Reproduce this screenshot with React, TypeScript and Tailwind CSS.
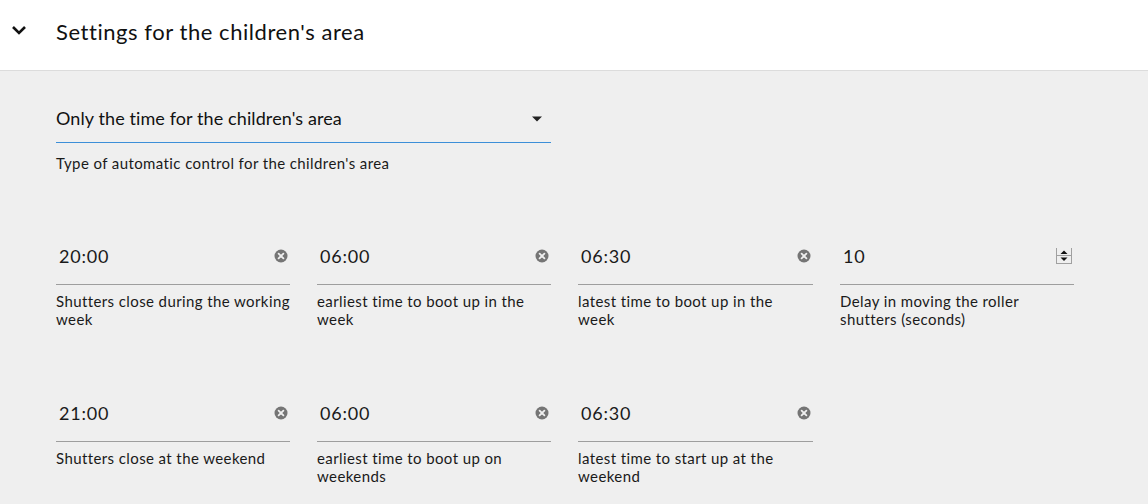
import React from "react";

const font = { fontFamily: 'Lato, "Open Sans", sans-serif' };

function ClearIcon() {
  return (
    <svg width="14" height="14" viewBox="0 0 14 14" className="shrink-0">
      <circle cx="7" cy="7" r="6.5" fill="#757575" />
      <path d="M4.6 4.6 L9.4 9.4 M9.4 4.6 L4.6 9.4" stroke="#efefef" strokeWidth="1.8" strokeLinecap="round" />
    </svg>
  );
}

function Spinner() {
  return (
    <div className="w-[16px] h-[16px] border-x border-b border-[#a0a0a0] flex flex-col shrink-0">
      <svg width="14" height="15" viewBox="0 0 14 15">
        <path d="M3.5 6 L7 2.5 L10.5 6 Z" fill="#111" />
        <line x1="0" y1="7.5" x2="14" y2="7.5" stroke="#a0a0a0" strokeWidth="1" />
        <path d="M3.5 9.5 L7 13 L10.5 9.5 Z" fill="#111" />
      </svg>
    </div>
  );
}

function Field({ value, label, spin }: { value: string; label: string; spin?: boolean }) {
  return (
    <div className="flex flex-col">
      <div className="h-[55px] flex items-center border-b border-[#9e9e9e] pl-[3px] pr-[2px]">
        <span className="flex-1 text-[18px] text-[#1a1a1a] tracking-[0.8px]">{value}</span>
        <span className="mb-[2px]">{spin ? <Spinner /> : <ClearIcon />}</span>
      </div>
      <div className="pt-[7px] text-[15px] leading-[18px] text-[#1a1a1a] tracking-[0.4px] h-[48px]">{label}</div>
    </div>
  );
}

export default function App() {
  return (
    <div className="w-[1148px] h-[504px] bg-[#efefef] overflow-hidden" style={font}>
      <div className="h-[71px] bg-white border-b border-[#dcdcdc] flex items-center">
        <div className="w-[56px] flex justify-start pl-[11px] pb-[10px]">
          <svg width="16" height="10" viewBox="0 0 16 10">
            <path d="M2 2 L8 8 L14 2" fill="none" stroke="#111" strokeWidth="2.6" />
          </svg>
        </div>
        <span className="text-[22px] text-[#111] pb-[8px] tracking-[0.55px]">Settings for the children's area</span>
      </div>
      <div className="pl-[56px] pt-[24px]">
        <div className="w-[495px]">
          <div className="h-[48px] flex items-center border-b border-[#3c8fd8]">
            <span className="flex-1 text-[18px] text-[#111] tracking-[0.1px]">Only the time for the children's area</span>
            <svg width="12" height="8" viewBox="0 0 12 8" className="mr-[8px]">
              <path d="M1 1.5 L11 1.5 L6 6.5 Z" fill="#222" />
            </svg>
          </div>
          <div className="pt-[9px] text-[15px] text-[#1a1a1a] tracking-[0.4px]">Type of automatic control for the children's area</div>
        </div>
        <div className="grid grid-cols-[234px_234px_235px_234px] gap-x-[27px] mt-[55px] gap-y-[54px]">
          <Field value="20:00" label="Shutters close during the working week" />
          <Field value="06:00" label="earliest time to boot up in the week" />
          <Field value="06:30" label="latest time to boot up in the week" />
          <Field value="10" label="Delay in moving the roller shutters (seconds)" spin />
          <Field value="21:00" label="Shutters close at the weekend" />
          <Field value="06:00" label="earliest time to boot up on weekends" />
          <Field value="06:30" label="latest time to start up at the weekend" />
        </div>
      </div>
    </div>
  );
}
